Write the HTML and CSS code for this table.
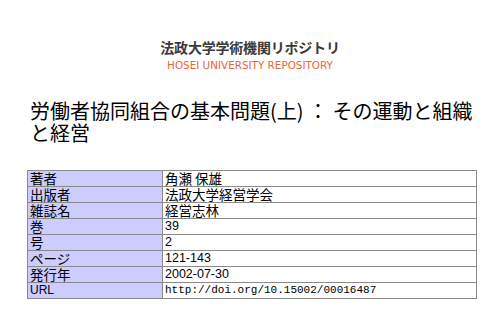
FILE: index.html
```html
<!DOCTYPE html>
<html lang="ja">
<head>
<meta charset="utf-8">
<link rel="stylesheet" href="styles.css">
</head>
<body>
<header class="logo">
  <div class="logo-jp">法政大学学術機関リポジトリ</div>
  <div class="logo-en">HOSEI UNIVERSITY REPOSITORY</div>
</header>
<h1 class="title">労働者協同組合の基本問題(上) ： その運動と組織と経営</h1>
<table class="meta">
  <tr><th>著者</th><td>角瀬 保雄</td></tr>
  <tr><th>出版者</th><td>法政大学経営学会</td></tr>
  <tr><th>雑誌名</th><td>経営志林</td></tr>
  <tr><th>巻</th><td class="num">39</td></tr>
  <tr><th>号</th><td class="num">2</td></tr>
  <tr><th>ページ</th><td class="num">121-143</td></tr>
  <tr><th>発行年</th><td class="num">2002-07-30</td></tr>
  <tr><th class="url-label">URL</th><td class="mono">http://doi.org/10.15002/00016487</td></tr>
</table>
</body>
</html>
```
FILE: styles.css
```css
html, body {
  margin: 0;
  padding: 0;
  background: #ffffff;
}
body {
  width: 500px;
  height: 322px;
  overflow: hidden;
  font-family: "Noto Sans CJK JP", "Liberation Sans", sans-serif;
  color: #000;
}
.logo {
  display: flex;
  flex-direction: column;
  align-items: center;
  padding-top: 38px;
}
.logo-jp {
  font-size: 14px;
  line-height: 18px;
  font-weight: 700;
  color: #3a3a3a;
  letter-spacing: -0.2px;
}
.logo-en {
  font-family: "DejaVu Sans", sans-serif;
  font-size: 10.4px;
  line-height: 14px;
  color: #e8663d;
  margin-top: 2px;
}
.title {
  margin: 28px 20px 0 30px;
  font-size: 20px;
  line-height: 22px;
  font-weight: 400;
  color: #000;
}
.meta {
  margin: 26px 0 0 27px;
  width: 450px;
  border-collapse: collapse;
  border: 1px solid #8a8a8a;
  font-size: 13.5px;
}
.meta th, .meta td {
  border: 1px solid #8a8a8a;
  padding: 0 2px;
  height: 15px;
  line-height: 15px;
  text-align: left;
  font-weight: 400;
  white-space: nowrap;
}
.meta th {
  width: 130px;
  background: #ccccff;
}
.meta td {
  background: #ffffff;
}
.num {
  font-family: "Liberation Sans", sans-serif;
  font-size: 12.5px;
}
.url-label {
  font-family: "Liberation Sans Narrow", "Liberation Sans", sans-serif;
  font-size: 12px;
}
.mono {
  font-family: "Liberation Mono", monospace;
  font-size: 11px;
}
```
